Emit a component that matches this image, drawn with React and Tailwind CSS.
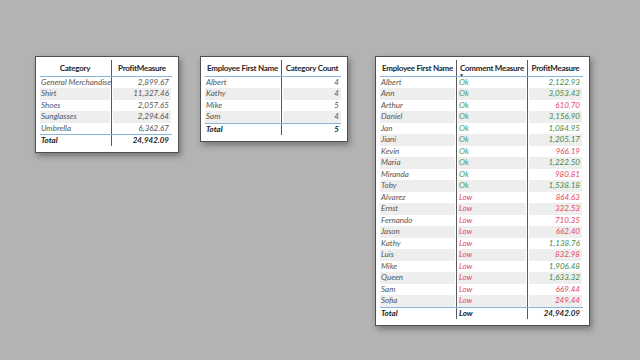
import React from 'react';

const t1 = {
  box: 'ml-[35px] mt-[56px] w-[144px]',
  cols: 'grid-cols-[70px_1px_58px]',
  heads: ['Category', 'ProfitMeasure'],
  rows: [
    ['General Merchandise', '2,899.67'],
    ['Shirt', '11,327.46'],
    ['Shoes', '2,057.65'],
    ['Sunglasses', '2,294.64'],
    ['Umbrella', '6,362.67'],
  ],
  total: ['Total', '24,942.09'],
};

const t2 = {
  box: 'ml-[21px] mt-[56px] w-[148px]',
  cols: 'grid-cols-[75px_1px_58px]',
  heads: ['Employee First Name', 'Category Count'],
  rows: [
    ['Albert', '4'],
    ['Kathy', '4'],
    ['Mike', '5'],
    ['Sam', '4'],
  ],
  total: ['Total', '5'],
};

const G = 'text-[#3f8a48]';
const R = 'text-[#e5455d]';

const people = [
  ['Albert', 'Ok', '2,122.93', G],
  ['Ann', 'Ok', '3,053.43', G],
  ['Arthur', 'Ok', '610.70', R],
  ['Daniel', 'Ok', '3,156.90', G],
  ['Jan', 'Ok', '1,084.95', G],
  ['Jiani', 'Ok', '1,205.17', G],
  ['Kevin', 'Ok', '966.19', R],
  ['Maria', 'Ok', '1,222.50', G],
  ['Miranda', 'Ok', '980.81', R],
  ['Toby', 'Ok', '1,538.18', G],
  ['Alvarez', 'Low', '864.63', R],
  ['Ernst', 'Low', '332.53', R],
  ['Fernando', 'Low', '710.35', R],
  ['Jason', 'Low', '662.40', R],
  ['Kathy', 'Low', '1,138.76', G],
  ['Luis', 'Low', '832.98', R],
  ['Mike', 'Low', '1,906.48', G],
  ['Queen', 'Low', '1,633.32', G],
  ['Sam', 'Low', '669.44', R],
  ['Sofia', 'Low', '249.44', R],
];

const box = 'bg-white border border-[#505050] shadow-[2px_3px_6px_rgba(0,0,0,0.35)] pl-[4px] pr-[6px] pt-[3px] pb-[6px]';
const div = <div className="bg-[#5a5a5a]" />;
const head = 'gap-x-px h-[16.5px] border-b border-[#86b6dc] items-center font-bold text-[#252525] tracking-[-0.25px] whitespace-nowrap';

function Table2Col({ t }) {
  return (
    <div className={`${t.box} ${box}`}>
      <div className={`grid ${t.cols} ${head}`}>
        <div className="text-center">{t.heads[0]}</div>
        <div className="bg-[#5a5a5a] self-stretch" />
        <div className="text-center">{t.heads[1]}</div>
      </div>
      {t.rows.map((r, i) => (
        <div key={i} className={`grid ${t.cols} gap-x-px h-[11.5px] italic text-[#555]`}>
          <div className={`pl-[1px] leading-[11.5px] whitespace-nowrap ${i % 2 ? 'bg-[#eeeeee]' : ''}`}>{r[0]}</div>
          {div}
          <div className={`pr-[2px] text-right leading-[11.5px] ${i % 2 ? 'bg-[#eeeeee]' : ''}`}>{r[1]}</div>
        </div>
      ))}
      <div className={`grid ${t.cols} gap-x-px h-[12px] border-t border-[#86b6dc] italic font-bold text-[#1a1a1a]`}>
        <div className="pl-[1px] leading-[11px]">{t.total[0]}</div>
        {div}
        <div className="pr-[2px] text-right leading-[11px]">{t.total[1]}</div>
      </div>
    </div>
  );
}

function CommentTable() {
  const cols = 'grid-cols-[75px_1px_68px_1px_53px]';
  return (
    <div className={`ml-[27px] mt-[56px] w-[215px] ${box}`}>
      <div className={`grid ${cols} ${head}`}>
        <div className="text-center">Employee First Name</div>
        <div className="bg-[#5a5a5a] self-stretch" />
        <div className="relative text-center">
          Comment Measure
          <span className="absolute left-[1px] top-[11px] text-[5px] leading-none text-[#333]">▼</span>
        </div>
        <div className="bg-[#5a5a5a] self-stretch" />
        <div className="text-center">ProfitMeasure</div>
      </div>
      {people.map((p, i) => {
        const shade = i % 2 ? 'bg-[#eeeeee]' : '';
        const c = p[1] === 'Ok' ? 'text-[#4a9a52]' : R;
        return (
          <div key={i} className={`grid ${cols} gap-x-px h-[11.5px] italic leading-[11.5px]`}>
            <div className={`pl-[1px] text-[#555] ${shade}`}>{p[0]}</div>
            {div}
            <div className={`pl-[1px] ${c} ${shade}`}>{p[1]}</div>
            {div}
            <div className={`pr-[2px] text-right ${p[3]} ${shade}`}>{p[2]}</div>
          </div>
        );
      })}
      <div className={`grid ${cols} gap-x-px h-[12px] border-t border-[#86b6dc] italic font-bold text-[#1a1a1a] leading-[11px]`}>
        <div className="pl-[1px]">Total</div>
        {div}
        <div className="pl-[1px]">Low</div>
        {div}
        <div className="pr-[2px] text-right">24,942.09</div>
      </div>
    </div>
  );
}

export default function App() {
  return (
    <div className="w-[640px] h-[360px] bg-[#b3b3b3] flex items-start text-[8px] font-['Lato',sans-serif] overflow-hidden">
      <Table2Col t={t1} />
      <Table2Col t={t2} />
      <CommentTable />
    </div>
  );
}
